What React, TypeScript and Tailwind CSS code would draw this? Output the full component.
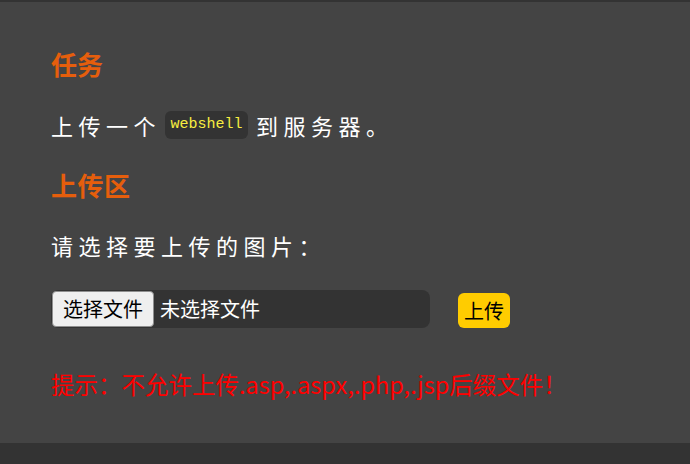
import React from "react";

const cjk = { fontFamily: '"Noto Sans CJK SC", "Noto Sans", sans-serif' };

export default function App() {
  return (
    <div className="min-h-screen w-full bg-[#333333]" style={cjk}>
      <div className="flex flex-col border-t-2 border-[#333333] bg-[#444444] pl-[51px] pt-[46px] pb-[44px]">
        <h2 className="m-0 text-[26px] font-bold leading-[32px] text-[#e65e0c]">任务</h2>
        <p className="mt-[31px] flex h-[28px] items-center text-[22px] leading-[28px] tracking-[5.5px] text-white">
          <span>上传一个</span>
          <code
            className="mr-[8px] ml-[4px] inline-flex h-[28px] w-[83px] items-center justify-center rounded-[6px] bg-[#333333] text-[15px] tracking-normal text-[#f8ee40]"
            style={{ fontFamily: '"Liberation Mono", "DejaVu Sans Mono", monospace' }}
          >
            webshell
          </code>
          <span>到服务器。</span>
        </p>
        <h2 className="mt-[30px] text-[26px] font-bold leading-[32px] tracking-[0.5px] text-[#e65e0c]">上传区</h2>
        <p className="mt-[30px] text-[22px] leading-[28px] tracking-[5.5px] text-white">请选择要上传的图片：</p>
        <div className="mt-[31px] flex items-end">
          <div className="flex h-[38px] w-[379px] items-center rounded-[8px] bg-[#333333] px-[1px]">
            <div className="flex h-[36px] items-center rounded-[4px] border border-[#8f8f8f] bg-[#efefef] px-[10px] text-[20px] text-black">
              选择文件
            </div>
            <span className="ml-[6px] text-[20px] text-white">未选择文件</span>
          </div>
          <div className="ml-[28px] flex h-[35px] w-[52px] items-center justify-center rounded-[6px] bg-[#ffcc00] text-[20px] text-black">
            上传
          </div>
        </div>
        <p className="mt-[41px] text-[23.5px] leading-[30px] text-[#ff0000]">提示：不允许上传.asp,.aspx,.php,.jsp后缀文件！</p>
      </div>
    </div>
  );
}
